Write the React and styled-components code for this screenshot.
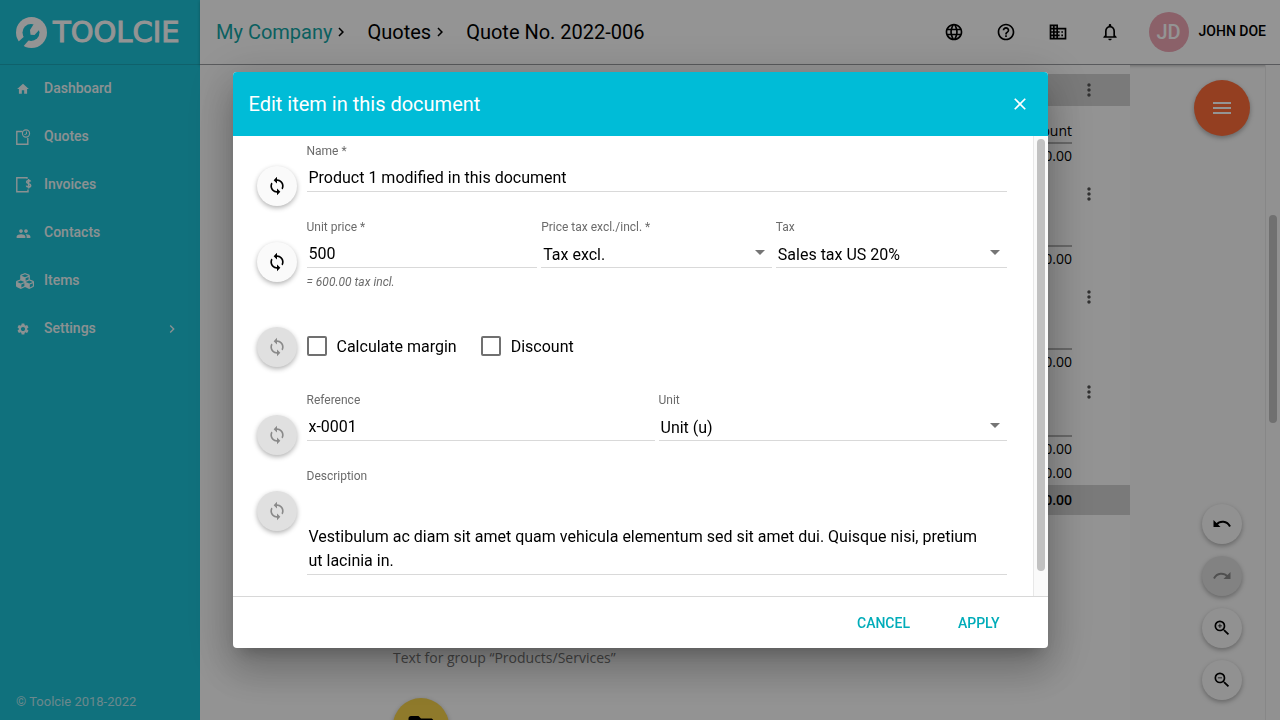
import React from "react";
import styled, { createGlobalStyle, css } from "styled-components";
import {
  MdHome,
  MdPeople,
  MdSettings,
  MdChevronRight,
  MdLanguage,
  MdHelpOutline,
  MdBusiness,
  MdNotificationsNone,
  MdMoreVert,
  MdMenu,
  MdClose,
  MdLoop,
  MdArrowDropDown,
  MdZoomIn,
  MdZoomOut,
  MdFolder,
} from "react-icons/md";
import { FaCubes } from "react-icons/fa";

const GlobalStyle = createGlobalStyle`
  *, *::before, *::after { box-sizing: border-box; }
  body {
    margin: 0;
    font-family: Roboto, "Liberation Sans", sans-serif;
    font-size: 14px;
    color: #000;
  }
  button, input, select, textarea { font: inherit; color: inherit; }
  button { cursor: pointer; }
`;

const Page = styled.div`
  display: flex;
  height: 100vh;
  overflow: hidden;
  background: #fafafa;
`;

/* ---------- sidebar ---------- */

const Sidebar = styled.aside`
  display: flex;
  flex-direction: column;
  flex: 0 0 200px;
  background: #1dc3d7;
  color: #fff;
`;

const Brand = styled.div`
  display: flex;
  align-items: center;
  gap: 6px;
  height: 65px;
  padding-left: 16px;
  border-bottom: 1px solid #1aa7b9;
  font-family: "DejaVu Sans", sans-serif;
  font-size: 29px;
  line-height: 32px;
  -webkit-text-stroke: 1px #fff;
`;

const Nav = styled.nav`
  display: flex;
  flex-direction: column;
  flex: 1;
`;

const NavLink = styled.a`
  display: flex;
  align-items: center;
  height: 48px;
  padding: 0 20px 0 16px;
  color: #f0fafc;
  font-weight: 500;
  text-decoration: none;
`;

const NavIcon = styled.span`
  display: flex;
  width: 28px;
`;

const NavText = styled.span`
  flex: 1;
  padding-bottom: 2px;
`;

const Copyright = styled.small`
  padding: 0 16px 10px;
  font-size: 13px;
  line-height: 16px;
  color: #b9eaf1;
`;

/* ---------- header ---------- */

const Main = styled.div`
  display: flex;
  flex-direction: column;
  flex: 1;
  min-width: 0;
`;

const Header = styled.header`
  display: flex;
  align-items: center;
  justify-content: space-between;
  height: 65px;
  padding: 0 14px 0 16px;
  background: #fff;
  border-bottom: 1px solid #9a9ca0;
  box-shadow: 0 1px 3px rgba(0, 0, 0, 0.25);
`;

const Crumbs = styled.nav`
  display: flex;
  align-items: center;
  gap: 17px;
  font-size: 20px;
  line-height: 24px;
  white-space: nowrap;
`;

const Crumb = styled.span`
  display: flex;
  align-items: center;
`;

const CrumbLink = styled.a`
  color: ${(p) => (p.$accent ? "#12a5a5" : "#000")};
  text-decoration: none;
`;

const HeaderTools = styled.div`
  display: flex;
  align-items: center;
  gap: 29px;
`;

const ToolIcons = styled.div`
  display: flex;
  gap: 32px;
`;

const IconButton = styled.button`
  display: flex;
  padding: 0;
  border: 0;
  background: none;
`;

const User = styled.div`
  display: flex;
  align-items: center;
  gap: 10px;
  font-weight: 500;
  white-space: nowrap;
`;

const UserName = styled.span`
  padding-bottom: 2px;
`;

const Avatar = styled.span`
  display: grid;
  place-items: center;
  width: 40px;
  height: 40px;
  border-radius: 50%;
  background: #f0a7b6;
  color: #fff;
  font-size: 20px;
`;

/* ---------- document ---------- */

const Content = styled.div`
  display: flex;
  flex: 1;
  min-height: 0;
`;

const Paper = styled.main`
  flex: 1;
  min-width: 0;
  overflow: hidden;
  padding: 9px 0 0 193px;
  background: #fdfdfd;
  font-family: "Open Sans", sans-serif;
`;

const DocTable = styled.table`
  width: 100%;
  table-layout: fixed;
  border-spacing: 0;
`;

const ActionCol = styled.col`
  width: 58px;
`;

const DocRow = styled.tr`
  height: ${(p) => p.$h}px;
  ${(p) => p.$band && css`background: #d2d2d2; font-weight: 600;`}
`;

const AmountCell = styled.td`
  padding: 0;
  text-align: right;
  line-height: 24px;
  vertical-align: ${(p) => p.$v || "top"};
  border-bottom: ${(p) => (p.$line ? "2px solid #b4b4b4" : "0")};
`;

const AmountHead = styled(AmountCell).attrs({ as: "th", scope: "col" })`
  font-weight: 400;
  line-height: 22px;
`;

const ActionCell = styled.td`
  padding: 0 0 ${(p) => (p.$item ? 4 : 0)}px 7px;
  vertical-align: middle;
  color: #555;
`;

const GroupNote = styled.p`
  margin: 131px 0 28px;
  line-height: 24px;
  color: #777;
`;

const Rail = styled.aside`
  display: flex;
  flex-direction: column;
  align-items: flex-end;
  justify-content: space-between;
  flex: 0 0 135px;
  padding: 15px 15px 20px 0;
`;

const RailStack = styled.div`
  display: flex;
  flex-direction: column;
  align-items: center;
  gap: 12px;
  width: 56px;
`;

const Fab = styled.button`
  display: grid;
  place-items: center;
  flex: none;
  width: 56px;
  height: 56px;
  padding: 0;
  border: 0;
  border-radius: 50%;
  background: ${(p) => p.$bg};
  color: ${(p) => p.$fg || "#000"};
  box-shadow: 0 2px 5px rgba(0, 0, 0, 0.3);
`;

const MiniFab = styled(Fab).attrs((p) => ({
  $bg: p.disabled ? "#e0e0e0" : "#fafafa",
  $fg: p.disabled ? "#8a8a8a" : "#000",
}))`
  width: 40px;
  height: 40px;
`;

const ScrollTrack = styled.div`
  display: flex;
  justify-content: center;
  flex: 0 0 15px;
  padding-top: ${(p) => p.$start};
  background: #fafafa;
  border-left: 1px solid #e8e8e8;
`;

const ScrollThumb = styled.div`
  width: 8px;
  height: ${(p) => p.$size};
  border-radius: 4px;
  background: #c1c1c1;
`;

/* ---------- dialog ---------- */

const Backdrop = styled.div`
  position: fixed;
  inset: 0;
  display: flex;
  align-items: center;
  justify-content: center;
  background: rgba(0, 0, 0, 0.42);
`;

const Dialog = styled.section`
  display: flex;
  flex-direction: column;
  width: 100%;
  max-width: 815px;
  max-height: 80vh;
  border-radius: 4px;
  overflow: hidden;
  background: #fff;
  box-shadow: 0 11px 15px -7px rgba(0, 0, 0, 0.2),
    0 24px 38px 3px rgba(0, 0, 0, 0.14), 0 9px 46px 8px rgba(0, 0, 0, 0.16);
`;

const DialogHead = styled.header`
  display: flex;
  align-items: center;
  justify-content: space-between;
  flex: 0 0 64px;
  padding: 0 18px 0 16px;
  background: #00bcd7;
  color: #fff;
`;

const DialogTitle = styled.h2`
  margin: 0;
  font-weight: 400;
  font-size: 20px;
  line-height: 24px;
`;

const DialogScroll = styled.div`
  display: flex;
  flex: 1;
  min-height: 0;
`;

const Form = styled.form`
  display: flex;
  flex-direction: column;
  gap: 12px;
  flex: 1;
  min-width: 0;
  padding: 6px 26px 24px 24px;
  overflow: hidden;
`;

const FormRow = styled.div`
  display: flex;
  align-items: flex-start;
  gap: 10px;
`;

const OptionsRow = styled(FormRow)`
  align-items: center;
  padding: 25px 0 12px;
`;

const ResetFab = styled(MiniFab)`
  margin-top: ${(p) => (p.$inline ? 0 : 24)}px;
`;

const Fields = styled.div`
  display: grid;
  grid-template-columns: repeat(${(p) => p.$cols || 1}, minmax(0, 1fr));
  gap: 4px;
  flex: 1;
  min-width: 0;
`;

const Field = styled.div`
  display: flex;
  flex-direction: column;
  min-width: 0;
`;

const Label = styled.label`
  font-size: 12px;
  line-height: 18px;
  color: #6b6b6b;
`;

const control = css`
  width: 100%;
  border: 0;
  border-bottom: 1px solid #d9d9d9;
  border-radius: 0;
  outline: 0;
  background: none;
  font-size: 16px;
`;

const Input = styled.input`
  ${control}
  height: 32px;
  padding: 4px 2px 0;
`;

const SelectBox = styled.div`
  display: grid;
  align-items: center;
  justify-items: end;
  color: #757575;

  > * { grid-area: 1 / 1; }
  > svg { pointer-events: none; }
`;

const Select = styled.select`
  ${control}
  appearance: none;
  height: 32px;
  padding: 6px 24px 0 2px;
  color: #000;
`;

const TextArea = styled.textarea`
  ${control}
  display: block;
  height: 90px;
  padding: 40px 16px 0 2px;
  line-height: 24px;
  resize: none;
  overflow: hidden;
`;

const Hint = styled.p`
  margin: 6px 0 0;
  font-size: 12px;
  font-style: italic;
  line-height: 16px;
  color: #6b6b6b;
`;

const Checks = styled.div`
  display: flex;
  gap: 24px;
`;

const Check = styled.label`
  display: flex;
  align-items: center;
  gap: 10px;
  font-size: 16px;
  line-height: 24px;
`;

const Checkbox = styled.input.attrs({ type: "checkbox" })`
  appearance: none;
  width: 20px;
  height: 20px;
  margin: 0 0 2px;
  border: 2px solid #707070;
  border-radius: 2px;
  background: #fff;
`;

const DialogFoot = styled.footer`
  display: flex;
  align-items: center;
  justify-content: flex-end;
  gap: 16px;
  flex: 0 0 52px;
  padding: 0 32px;
  border-top: 1px solid #d8d8d8;
`;

const TextButton = styled.button`
  height: 36px;
  padding: 0 16px;
  border: 0;
  background: none;
  color: #00acb9;
  font-weight: 500;
  text-transform: uppercase;
`;

/* ---------- drawings ---------- */

const LogoMark = () => (
  <svg width="31" height="31" viewBox="0 0 31 31" aria-hidden="true">
    <circle cx="15.500" cy="15.500" r="15.500" fill="#fff" />
    <circle cx="15" cy="15.500" r="8.500" fill="#1dc3d7" />
    <path d="M12 16 15.500 20 6 31 1 26Z" fill="#1dc3d7" />
    <path d="M8 22.500 6 31 1 27Z" fill="#1dc3d7" />
    <path d="M19 5 25 11 18.500 18 14.500 17.800 14 13Z" fill="#fff" />
  </svg>
);

const QuoteIcon = () => (
  <svg width="15" height="16" viewBox="0 0 15 16" fill="none" stroke="currentColor" aria-hidden="true">
    <path d="M6.500 2.500H.8V15.200H11.800V9" strokeWidth="1.400" />
    <circle cx="10" cy="4.500" r="3.600" strokeWidth="1.100" />
    <path d="M10.500 2.500V5L8.500 5.500" strokeWidth="1" />
  </svg>
);

const InvoiceIcon = () => (
  <svg width="16" height="16" viewBox="0 0 16 16" fill="none" stroke="currentColor" aria-hidden="true">
    <path d="M11 1.800V.8H.8V14.800H12V12.500" strokeWidth="1.400" />
    <path
      d="M14.600 4.500C14.300 3 10.600 3 10.600 5 10.600 7 14.700 6.200 14.700 8.400 14.700 10.500 10.700 10.300 10.400 8.700M12.600 2V11.500"
      strokeWidth="1.500"
    />
  </svg>
);

const CurveArrow = ({ flip }) => (
  <svg width="20" height="20" viewBox="0 0 20 20" aria-hidden="true">
    <g transform={flip ? "matrix(-1 0 0 1 20 0)" : undefined}>
      <path d="M1.500 6V13H8.500Z" fill="currentColor" />
      <path d="M4.500 10.500C8 6.500 15 6.500 18 12.500" fill="none" stroke="currentColor" strokeWidth="2" />
    </g>
  </svg>
);

/* ---------- data ---------- */

const navItems = [
  { label: "Dashboard", icon: <MdHome size={14} /> },
  { label: "Quotes", icon: <QuoteIcon /> },
  { label: "Invoices", icon: <InvoiceIcon /> },
  { label: "Contacts", icon: <MdPeople size={15} /> },
  { label: "Items", icon: <FaCubes size={18} /> },
  { label: "Settings", icon: <MdSettings size={14} />, nested: true },
];

const tools = [
  ["Language", MdLanguage],
  ["Help", MdHelpOutline],
  ["Companies", MdBusiness],
  ["Notifications", MdNotificationsNone],
];

const lines = [
  { amount: "500.00", h: 103, item: true },
  { amount: "500.00", h: 103, item: true },
  { amount: "500.00", h: 87, item: true },
  { amount: "500.00", h: 24 },
  { amount: "100.00", h: 24 },
];

const RowMenu = () => (
  <IconButton aria-label="Row menu">
    <MdMoreVert size={20} />
  </IconButton>
);

const Reset = ({ disabled, inline }) => (
  <ResetFab type="button" disabled={disabled} $inline={inline} aria-label="Reset">
    <MdLoop size={20} />
  </ResetFab>
);

const SelectField = ({ id, label, value }) => (
  <Field>
    <Label htmlFor={id}>{label}</Label>
    <SelectBox>
      <Select id={id} defaultValue={value}>
        <option>{value}</option>
      </Select>
      <MdArrowDropDown size={24} />
    </SelectBox>
  </Field>
);

export default function App() {
  return (
    <>
      <GlobalStyle />
      <Page>
        <Sidebar>
          <Brand>
            <LogoMark />
            TOOLCIE
          </Brand>
          <Nav>
            {navItems.map((item) => (
              <NavLink href="#" key={item.label}>
                <NavIcon>{item.icon}</NavIcon>
                <NavText>{item.label}</NavText>
                {item.nested && <MdChevronRight size={16} />}
              </NavLink>
            ))}
          </Nav>
          <Copyright>© Toolcie 2018-2022</Copyright>
        </Sidebar>

        <Main>
          <Header>
            <Crumbs aria-label="Breadcrumb">
              <Crumb>
                <CrumbLink href="#" $accent>My Company</CrumbLink>
                <MdChevronRight size={18} />
              </Crumb>
              <Crumb>
                <CrumbLink href="#">Quotes</CrumbLink>
                <MdChevronRight size={18} />
              </Crumb>
              <Crumb>Quote No. 2022-006</Crumb>
            </Crumbs>
            <HeaderTools>
              <ToolIcons>
                {tools.map(([name, Icon]) => (
                  <IconButton key={name} aria-label={name}>
                    <Icon size={20} />
                  </IconButton>
                ))}
              </ToolIcons>
              <User>
                <Avatar>JD</Avatar>
                <UserName>JOHN DOE</UserName>
              </User>
            </HeaderTools>
          </Header>

          <Content>
            <Paper>
              <DocTable>
                <colgroup>
                  <col />
                  <ActionCol />
                </colgroup>
                <tbody>
                  <DocRow $h={32} $band>
                    <AmountCell />
                    <ActionCell><RowMenu /></ActionCell>
                  </DocRow>
                  <DocRow $h={38}>
                    <AmountHead $v="bottom" $line>Amount</AmountHead>
                    <ActionCell />
                  </DocRow>
                  {lines.map((row, i) => (
                    <DocRow key={i} $h={row.h}>
                      <AmountCell $line={row.item}>{row.amount}</AmountCell>
                      <ActionCell $item={row.item}>{row.item && <RowMenu />}</ActionCell>
                    </DocRow>
                  ))}
                  <DocRow $h={30} $band>
                    <AmountCell $v="middle">600.00</AmountCell>
                    <ActionCell />
                  </DocRow>
                </tbody>
              </DocTable>
              <GroupNote>Text for group “Products/Services”</GroupNote>
              <Fab $bg="#f7d34a" aria-label="Add group"><MdFolder size={30} /></Fab>
            </Paper>
            <Rail>
              <Fab $bg="#ff6d3a" $fg="#fff" aria-label="Menu"><MdMenu size={24} /></Fab>
              <RailStack>
                <MiniFab aria-label="Undo"><CurveArrow /></MiniFab>
                <MiniFab aria-label="Redo" disabled><CurveArrow flip /></MiniFab>
                <MiniFab aria-label="Zoom in"><MdZoomIn size={20} /></MiniFab>
                <MiniFab aria-label="Zoom out"><MdZoomOut size={20} /></MiniFab>
              </RailStack>
            </Rail>
            <ScrollTrack $start="150px">
              <ScrollThumb $size="208px" />
            </ScrollTrack>
          </Content>
        </Main>
      </Page>

      <Backdrop>
        <Dialog role="dialog" aria-modal="true" aria-labelledby="dialog-title">
          <DialogHead>
            <DialogTitle id="dialog-title">Edit item in this document</DialogTitle>
            <IconButton aria-label="Close"><MdClose size={20} /></IconButton>
          </DialogHead>
          <DialogScroll>
            <Form id="item-form" onSubmit={(e) => e.preventDefault()}>
              <FormRow>
                <Reset />
                <Fields>
                  <Field>
                    <Label htmlFor="name">Name *</Label>
                    <Input id="name" defaultValue="Product 1 modified in this document" />
                  </Field>
                </Fields>
              </FormRow>
              <FormRow>
                <Reset />
                <Fields $cols={3}>
                  <Field>
                    <Label htmlFor="price">Unit price *</Label>
                    <Input id="price" defaultValue="500" />
                    <Hint>= 600.00 tax incl.</Hint>
                  </Field>
                  <SelectField id="mode" label="Price tax excl./incl. *" value="Tax excl." />
                  <SelectField id="tax" label="Tax" value="Sales tax US 20%" />
                </Fields>
              </FormRow>
              <OptionsRow>
                <Reset disabled inline />
                <Checks>
                  <Check><Checkbox />Calculate margin</Check>
                  <Check><Checkbox />Discount</Check>
                </Checks>
              </OptionsRow>
              <FormRow>
                <Reset disabled />
                <Fields $cols={2}>
                  <Field>
                    <Label htmlFor="reference">Reference</Label>
                    <Input id="reference" defaultValue="x-0001" />
                  </Field>
                  <SelectField id="unit" label="Unit" value="Unit (u)" />
                </Fields>
              </FormRow>
              <FormRow>
                <Reset disabled />
                <Fields>
                  <Field>
                    <Label htmlFor="description">Description</Label>
                    <TextArea
                      id="description"
                      defaultValue="Vestibulum ac diam sit amet quam vehicula elementum sed sit amet dui. Quisque nisi, pretium ut lacinia in."
                    />
                  </Field>
                </Fields>
              </FormRow>
            </Form>
            <ScrollTrack $start="3px">
              <ScrollThumb $size="calc(100% - 25px)" />
            </ScrollTrack>
          </DialogScroll>
          <DialogFoot>
            <TextButton type="button">Cancel</TextButton>
            <TextButton type="submit" form="item-form">Apply</TextButton>
          </DialogFoot>
        </Dialog>
      </Backdrop>
    </>
  );
}
